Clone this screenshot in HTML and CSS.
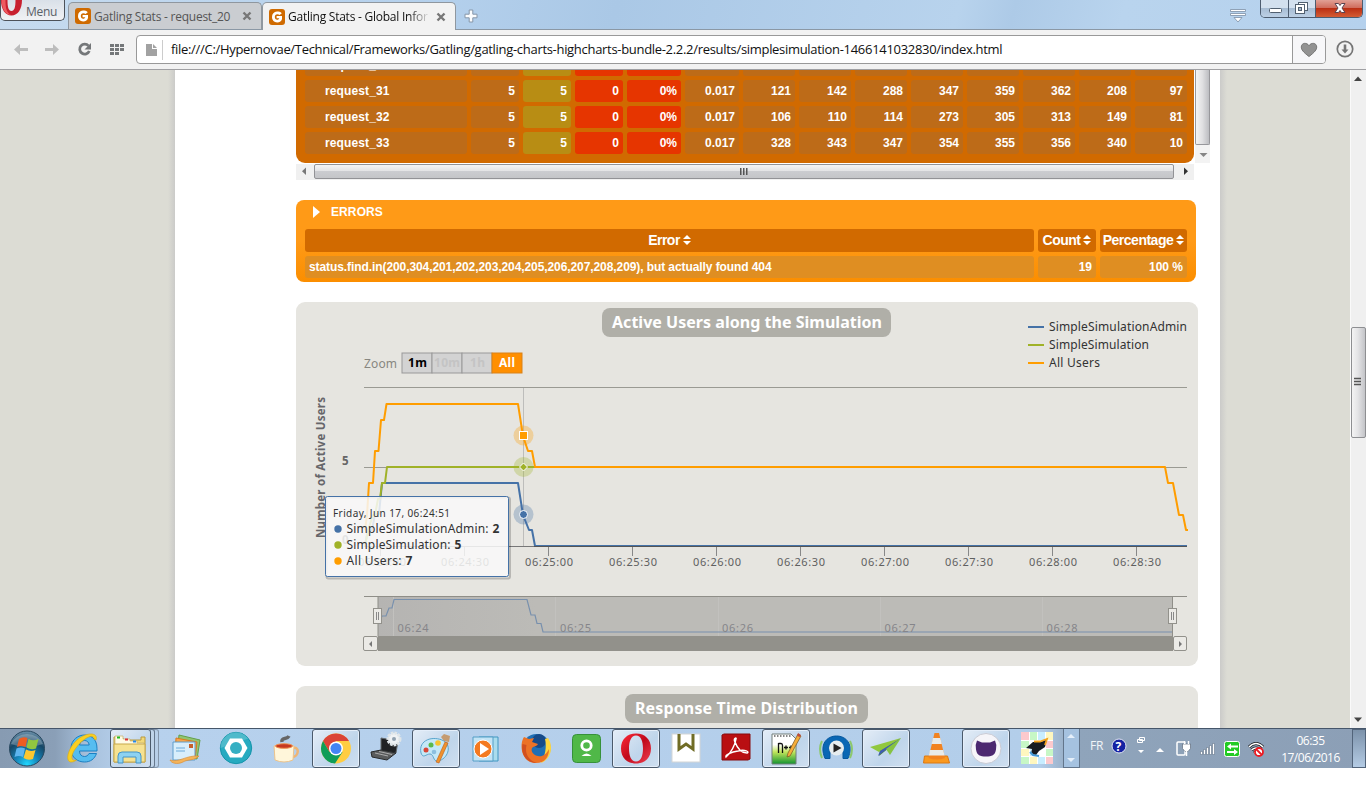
FILE: index.html
```html
<!DOCTYPE html>
<html lang="en">
<head>
<meta charset="utf-8">
<title>Gatling Stats - Global Information</title>
<link rel="stylesheet" href="styles.css">
</head>
<body>
<svg width="0" height="0" class="defs" aria-hidden="true">
  <defs>
    <linearGradient id="redO" x1="0" y1="0" x2="1" y2="1"><stop offset="0" stop-color="#ff2a38"/><stop offset=".5" stop-color="#c00a1c"/><stop offset="1" stop-color="#f04050"/></linearGradient>
    <linearGradient id="greyFill" x1="0" y1="0" x2="1" y2="0"><stop offset="0" stop-color="#b5b4b2"/><stop offset=".2" stop-color="#bcbbb7"/><stop offset="1" stop-color="#bcbbb7"/></linearGradient>
    <symbol id="gat" viewBox="0 0 16 16"><rect width="16" height="16" rx="3" fill="#cf6a00"/><path d="M12.8 4.2C11.4 2.9 9.8 2.6 8 2.6 4.9 2.8 3 5 3 8c0 3.200 2.200 5.400 5.200 5.400 2.600 0 4.300-1.300 4.800-3.400V7H7.600v2.300h2.700c-.3.900-1 1.500-2.100 1.500-1.500 0-2.400-1.200-2.400-2.800s.9-2.800 2.600-2.800c.9 0 1.600.3 2.200.9z" fill="#fff"/></symbol>
    <symbol id="sort" viewBox="0 0 8 10"><path d="M4 0l4 4H0zM0 6h8l-4 4z" fill="#fff"/></symbol>
  </defs>
</svg>

<header class="titlebar">
  <div class="menu"><svg width="22" height="18" viewBox="0 0 22 18"><path d="M0 0C0 9 4 15.500 10.500 15.500S21 9 21 0H14.500C14.500 7 13.500 11 10.500 11S6.500 7 6.500 0z" fill="#c8202f"/><path d="M.500 0C1 9 4 14.500 10 15 5 12.500 4.500 7 4.500 0z" fill="#ee5a60"/></svg><span>Menu</span></div>
  <div class="tab off"><svg width="16" height="16"><use href="#gat"/></svg><span class="tt">Gatling Stats - request_20</span><svg class="x" width="10" height="10" viewBox="0 0 10 10"><path d="M1.500 1.500l7 7M8.500 1.500l-7 7" stroke="#777" stroke-width="2.400"/></svg></div>
  <div class="tab on"><svg width="16" height="16"><use href="#gat"/></svg><span class="tt fade">Gatling Stats - Global Infor</span><svg class="x" width="10" height="10" viewBox="0 0 10 10"><path d="M1.500 1.500l7 7M8.500 1.500l-7 7" stroke="#777" stroke-width="2.400"/></svg></div>
  <svg class="plus" width="14" height="14" viewBox="0 0 14 14"><path d="M5.200 1h3.600v4.200H13v3.600H8.800V13H5.200V8.800H1V5.200h4.200z" fill="#fbfcfd" stroke="#8696a8"/></svg>
  <div class="grow"></div>
  <svg class="tabmenu" width="16" height="16" viewBox="0 0 16 16"><path d="M.500 1.500h15v2H.500zM.500 5.500h15v2H.500zM4 9.500h8l-4 4.500z" fill="#fff" stroke="#7b8ea4" stroke-width=".8"/></svg>
  <div class="winbtns">
    <div class="wb min"><svg width="28" height="17"><rect x="8.500" y="8.500" width="12" height="4" rx="1" fill="#fff" stroke="#526070"/></svg></div>
    <div class="wb max"><svg width="26" height="17"><rect x="9.500" y="2.500" width="9" height="8" fill="#fff" stroke="#526070"/><rect x="6.500" y="4.500" width="9" height="9" fill="#fff" stroke="#526070"/><rect x="9.500" y="7.500" width="3" height="3" fill="#a8b8ca" stroke="#526070"/></svg></div>
    <div class="wb cls"><svg width="47" height="17"><path d="M19 3.500h3.500l1.500 2 1.500-2H29l-3 4.500 3 4.500h-3.500l-1.500-2-1.500 2H19l3-4.500z" fill="#fff" stroke="#5b4450"/></svg></div>
  </div>
</header>

<nav class="toolbar">
  <svg class="navicons" width="136" height="39" viewBox="0 0 136 39">
    <path d="M14 19.500l6-5.500v4h8v3h-8v4z" fill="#bdbdbd"/><path d="M59 19.500l-6-5.500v4h-8v3h8v4z" fill="#bdbdbd"/>
    <path d="M88.500 15.800a5 5 0 1 0 .8 5.200" fill="none" stroke="#747779" stroke-width="2.800"/><path d="M91 13v6.500h-6.500z" fill="#747779"/>
    <g fill="#747779"><path d="M110 14h4v3h-4zM115 14h4v3h-4zM120 14h4v3h-4zM110 18h4v3h-4zM115 18h4v3h-4zM120 18h4v3h-4zM110 22h4v3h-4zM115 22h4v3h-4z"/></g>
  </svg>
  <div class="address">
    <svg width="26" height="26" viewBox="0 0 26 26"><path d="M9 7h6v5h5v7H9z" fill="#a2a2a2"/><path d="M16 7l4 4h-4z" fill="#a2a2a2"/><path d="M25.500 3v20" stroke="#ccc"/></svg>
    <span class="url">file:///C:/Hypernovae/Technical/Frameworks/Gatling/gatling-charts-highcharts-bundle-2.2.2/results/simplesimulation-1466141032830/index.html</span>
    <div class="heart"><svg width="18" height="16" viewBox="0 0 18 16"><path d="M9 14.500C3 10 1.300 7.500 1.300 5 1.300.6 7 .2 9 3.800 11 .2 16.700.6 16.700 5c0 2.500-1.700 5-7.700 9.500z" fill="#929292" stroke="#777"/></svg></div>
  </div>
  <svg class="dl" width="18" height="18" viewBox="0 0 18 18"><circle cx="9" cy="9" r="7.700" fill="none" stroke="#757575" stroke-width="1.700"/><path d="M7.700 4.500h2.600v5h2.200L9 13.500 5.500 9.500h2.200z" fill="#757575"/></svg>
</nav>

<main class="view">
  <div class="side left"></div>
  <section class="page">
    <div class="statswrap">
      <div class="stats">
        <div class="row cut"><i class="nm">request_30</i><i></i><i class="ok"></i><i class="ko"></i><i class="ko"></i><i></i><i></i><i></i><i></i><i></i><i></i><i></i><i></i><i></i></div>
        <div class="row"><i class="nm">request_31</i><i>5</i><i class="ok">5</i><i class="ko">0</i><i class="ko">0%</i><i>0.017</i><i>121</i><i>142</i><i>288</i><i>347</i><i>359</i><i>362</i><i>208</i><i>97</i></div>
        <div class="row"><i class="nm">request_32</i><i>5</i><i class="ok">5</i><i class="ko">0</i><i class="ko">0%</i><i>0.017</i><i>106</i><i>110</i><i>114</i><i>273</i><i>305</i><i>313</i><i>149</i><i>81</i></div>
        <div class="row"><i class="nm">request_33</i><i>5</i><i class="ok">5</i><i class="ko">0</i><i class="ko">0%</i><i>0.017</i><i>328</i><i>343</i><i>347</i><i>354</i><i>355</i><i>356</i><i>340</i><i>10</i></div>
      </div>
      <div class="vbar"><div class="vthumb"></div><svg width="15" height="18"><path d="M4.500 8h8l-4 4z" fill="#868686"/></svg></div>
    </div>
    <div class="hbar"><svg width="18" height="15"><path d="M10 3.500v7.500L6 7.200z" fill="#777"/></svg><div class="hthumb"><svg width="10" height="8"><path d="M1 0h1.500v7H1zM4 0h1.500v7H4zM7 0h1.500v7H7z" fill="#555"/></svg></div><svg width="20" height="15"><path d="M10 3.500v7.500l4-3.800z" fill="#333"/></svg></div>

    <div class="errors">
      <div class="ehead"><svg width="8" height="12"><path d="M0 0l7 6-7 6z" fill="#fff"/></svg><span>ERRORS</span></div>
      <div class="erow th"><b>Error<svg width="8" height="10"><use href="#sort"/></svg></b><b>Count<svg width="8" height="10"><use href="#sort"/></svg></b><b>Percentage<svg width="8" height="10"><use href="#sort"/></svg></b></div>
      <div class="erow td"><i>status.find.in(200,304,201,202,203,204,205,206,207,208,209), but actually found 404</i><i>19</i><i>100 %</i></div>
    </div>

    <div class="chart">
      <svg width="902" height="364" viewBox="296 302 902 364">
        <rect x="602" y="308" width="289" height="29" rx="8" fill="#b0afa8"/>
        <text x="612" y="328" textLength="270" class="ctitle">Active Users along the Simulation</text>
        <g stroke-width="2"><path d="M1028 327h16" stroke="#4572a7"/><path d="M1028 345h16" stroke="#a0b228"/><path d="M1028 363h16" stroke="#ff9d00"/></g>
        <g class="t12 dark"><text x="1049" y="331" textLength="138">SimpleSimulationAdmin</text><text x="1049" y="349" textLength="100">SimpleSimulation</text><text x="1049" y="367" textLength="51">All Users</text></g>
        <text x="364" y="368" textLength="33" class="t12 zoomlab">Zoom</text>
        <g stroke="#999" fill="#d3d3d3"><rect x="402" y="353" width="30" height="20"/><rect x="432" y="353" width="30" height="20"/><rect x="462" y="353" width="30" height="20"/><rect x="492" y="353" width="30" height="20" fill="#ff8f00" stroke="#d98218"/></g>
        <g class="zb"><text x="408" y="367" textLength="19">1m</text><text x="434" y="367" textLength="26" class="dis">10m</text><text x="470" y="367" textLength="15" class="dis">1h</text><text x="499" y="367" textLength="16" class="act">All</text></g>
        <path d="M364 387.500h823M364 467.500h823" stroke="#9a9a93"/>
        <path d="M523.500 388v158" stroke="#bdbdbb"/>
        <path d="M364 546.500h823" stroke="#777"/>
        <path d="M380.500 547v9M464.500 547v9M548.500 547v9M632.500 547v9M716.500 547v9M800.500 547v9M884.500 547v9M968.500 547v9M1052.500 547v9M1136.500 547v9" stroke="#888"/>
        <text transform="translate(325 538) rotate(-90)" textLength="141" class="ytitle">Number of Active Users</text>
        <text x="342" y="465" class="axb">5</text><text x="342" y="544" class="axb">0</text>
        <g class="t11 ax"><text x="358" y="566" textLength="48">06:24:00</text><text x="441" y="566" textLength="48">06:24:30</text><text x="525" y="566" textLength="48">06:25:00</text><text x="609" y="566" textLength="48">06:25:30</text><text x="693" y="566" textLength="48">06:26:00</text><text x="777" y="566" textLength="48">06:26:30</text><text x="861" y="566" textLength="48">06:27:00</text><text x="945" y="566" textLength="48">06:27:30</text><text x="1029" y="566" textLength="48">06:28:00</text><text x="1113" y="566" textLength="48">06:28:30</text></g>
        <g fill="none" stroke-width="2" stroke-linejoin="round">
          <path d="M365 545l3-15h4l3-16h4l3-31h136l5 32 6 15h3l3 16h652" stroke="#4572a7"/>
          <path d="M365 546l3-16 5-15h2l3-16h2l2-16h3l2-16H535" stroke="#a0b228"/>
          <path d="M365 530l2-15 2-32h4l2-32h3.500l2.500-31h3l2.500-16H518l5 32 5 15h4l3 16h630l3 16h5l6 32h4l3 15h2" stroke="#ff9d00"/>
        </g>
        <path d="M534 546.500h653" stroke="#555"/>
        <circle cx="523.500" cy="435.500" r="10" fill="#ff9d00" opacity=".3"/><rect x="519.500" y="431.500" width="8" height="8" fill="#ff9d00" stroke="#fff"/>
        <circle cx="523.500" cy="467" r="10" fill="#a0b228" opacity=".3"/><path d="M523.500 463l4 4-4 4-4-4z" fill="#a0b228" stroke="#fff"/>
        <circle cx="523.500" cy="514.500" r="10" fill="#4572a7" opacity=".3"/><circle cx="523.500" cy="514.500" r="4" fill="#4572a7" stroke="#fff"/>

        <rect x="378" y="597" width="794" height="39" fill="url(#greyFill)"/>
        <path d="M393.500 597v39M555.500 597v39M718.500 597v39M880.500 597v39M1042.500 597v39" stroke="#c2c1be"/>
        <path d="M364 596.500h14v40M1172.500 636v-39.500M378 596.500h809" stroke="#8f8e88" fill="none"/>
        <path d="M379 624l3-8h4l3-8h3l2-8.500h133l4 15.500h4l2 8.500h4l2 8.500h629" fill="none" stroke="#7890ad" stroke-width="1.200"/>
        <g class="t11 nav"><text x="397.500" y="632" textLength="31">06:24</text><text x="560" y="632" textLength="31">06:25</text><text x="722" y="632" textLength="31">06:26</text><text x="884.500" y="632" textLength="31">06:27</text><text x="1046.500" y="632" textLength="31">06:28</text></g>
        <rect x="378" y="636" width="795" height="15" fill="#92918b"/>
        <g fill="#ebeae6" stroke="#92918b"><rect x="363.500" y="636.500" width="14" height="14" rx="1.500"/><rect x="1173.500" y="636.500" width="13" height="14" rx="1.500"/><rect x="373.500" y="608.500" width="8" height="15"/><rect x="1168.500" y="608.500" width="8" height="15"/></g>
        <path d="M376.500 612v8M378.500 612v8M1171.500 612v8M1173.500 612v8" stroke="#888"/>
        <path d="M372 641v6l-3-3zM1179 641v6l3-3z" fill="#777"/>

        <rect x="326.500" y="497.500" width="183.500" height="81" rx="2" fill="none" stroke="#000" stroke-width="2" opacity=".2"/>
        <rect x="325.500" y="496.500" width="183" height="80" rx="2" fill="#f9f9f9" fill-opacity=".85" stroke="#4572a7"/>
        <text x="333" y="517" textLength="117" class="t10 dark">Friday, Jun 17, 06:24:51</text>
        <circle cx="338" cy="529" r="3.700" fill="#4572a7"/><circle cx="338" cy="545" r="3.700" fill="#a0b228"/><circle cx="338" cy="561" r="3.700" fill="#ff9d00"/>
        <g class="t12 dark"><text x="346.500" y="533" textLength="142">SimpleSimulationAdmin:</text><text x="346.500" y="549" textLength="104">SimpleSimulation:</text><text x="346.500" y="565" textLength="55">All Users:</text><g font-weight="700"><text x="492.500" y="533">2</text><text x="454.500" y="549">5</text><text x="405.500" y="565">7</text></g></g>
      </svg>
    </div>

    <div class="chart second">
      <svg width="902" height="60" viewBox="296 686 902 60"><rect x="625" y="694" width="243" height="29" rx="8" fill="#b0afa8"/><text x="635" y="714" textLength="223" class="ctitle">Response Time Distribution</text></svg>
    </div>
  </section>
  <div class="side right"></div>
  <div class="scroll"><svg width="16" height="658"><path d="M3 11l4-4.500 4 4.500z" fill="#444"/><path d="M3 647.500h8l-4 4.500z" fill="#444"/><defs><linearGradient id="sg"><stop offset="0" stop-color="#f5f5f5"/><stop offset=".45" stop-color="#e4e4e6"/><stop offset="1" stop-color="#c1c2c6"/></linearGradient></defs><rect x=".5" y="257.500" width="14" height="110" rx="1.500" fill="url(#sg)" stroke="#8e8f92"/><path d="M3 308.500h7M3 311.500h7M3 314.500h7" stroke="#555" stroke-width="1.500"/></svg></div>
</main>

<footer class="taskbar">
  <div class="start"><svg width="61" height="39" viewBox="0 0 61 39">
    <defs><radialGradient id="orb" cx=".5" cy=".95" r=".95"><stop offset="0" stop-color="#1fd7ff"/><stop offset=".35" stop-color="#1583b8"/><stop offset=".7" stop-color="#164766"/><stop offset="1" stop-color="#6f94ad"/></radialGradient></defs>
    <circle cx="27" cy="19.500" r="17.500" fill="url(#orb)" stroke="#29485f"/><path d="M11 15a17 15 0 0 1 32 0q-16 6-32 0z" fill="#fff" opacity=".25"/>
    <path d="M19 10q4-3 8.500-1l-2 9q-4-2-8.500 0z" fill="#ee5d22"/><path d="M28.500 10q5 2.500 10 0l-2.500 9.500q-5 2-9.500-1z" fill="#91c640"/><path d="M16.500 19.500q4.500-2 8.500 0l-2 8.500q-4-2-8.500 0z" fill="#5db5ef"/><path d="M26 20.500q4.500 2.500 9.500.5L33 30q-5 2-9.500-1z" fill="#fdc72f"/></svg></div>
  <div class="tile"><svg width="50" height="39" viewBox="3 0 50 39"><g transform="translate(1 0)"><path d="M38 19.500C38 9 31 6 25.500 6S12 10 12 19.500 19 33 25.500 33c6 0 10-3 12-8.500h-7.500c-1 2-2.500 3-4.500 3-3 0-5-2-5-5.500H38zM20.500 16c.5-3 2.500-4.500 5-4.500s4.300 1.500 4.700 4.500z" fill="#56bdf0" stroke="#1b7fc2"/><path d="M37 11C40 2 24 3 15 14 7 24 7 34 13 33c1.500 0 3-1 4.500-2-6 2-6.500-5 1-14C25 9 35 4 35 10z" fill="#f9cf22" stroke="#d9a80f" stroke-width=".6"/></g></svg></div>
  <div class="tile open expl"><svg width="50" height="39" viewBox="0 0 50 39"><path d="M4 12V8h8l2 3h17v-3h4v25H4z" fill="#f2d978" stroke="#b99a3c"/><path d="M5 7h8v3h7v2h7v2h7v4H5z" fill="#fffbe6" stroke="#c6b069" stroke-width=".7"/><path d="M7 7.500h3v2H7z" fill="#2b2"/><path d="M15 9.500h3v2h-3z" fill="#d33"/><path d="M23 11.500h3v2h-3z" fill="#28e"/><path d="M4 15h31v18H4z" fill="#f6e291" stroke="#c7a84c"/><path d="M8 34v-7q0-4 4-4h15q4 0 4 4v7h-5v-6H13v6z" fill="#8dd2f1" stroke="#4494c6"/></svg></div>
  <div class="tile"><svg width="50" height="39" viewBox="0 0 50 39"><path d="M18 6l21 5-3 19-20-5z" fill="#91c571" stroke="#64a04b"/><path d="M15 9l21 4-2 17-20-4z" fill="#f6a54b" stroke="#d97920"/><path d="M12 13h22v18H12z" fill="#d8eefb" stroke="#5f9cca"/><path d="M28 15h4v4h-4z" fill="#c6612c"/><path d="M15 19h9M15 22h9" stroke="#6aaada"/><path d="M9 31c9 3 16-5 29-4-5 5-11 3-16 6-6 3-12 1-13-2z" fill="#f5b45a" stroke="#dd8f33" stroke-width=".7"/></svg></div>
  <div class="tile"><svg width="50" height="39" viewBox="0 0 50 39"><circle cx="25" cy="19" r="15.700" fill="#26aac0" stroke="#1594ab"/><path d="M9.500 19a15.500 15.500 0 0 1 28-9.500z" fill="#69c5d2" opacity=".6"/><path d="M19 9.500h12l5.500 9.500-5.500 9.500H19L13.500 19z" fill="#fff"/><circle cx="25" cy="19" r="6" fill="#35afc3"/></svg></div>
  <div class="tile"><svg width="50" height="39" viewBox="0 0 50 39"><path d="M32 19c7-2 6 9-1 9" fill="none" stroke="#eeb574" stroke-width="2.500"/><path d="M13 17q10-3 20 0l-1 14q-9 4-18 0z" fill="#fff6da" stroke="#ecc38b"/><ellipse cx="23" cy="17" rx="8.500" ry="2.300" fill="#c63821" stroke="#ef9350"/><path d="M21 13c-1-5 5-2 7-6" stroke="#666" stroke-width="3.500" fill="none"/></svg></div>
  <div class="tile open"><svg width="50" height="39" viewBox="0 0 50 39"><circle cx="25" cy="19.500" r="15" fill="#ffcd42"/><path d="M12 12a15 15 0 0 1 26 0H25l-6.500 11z" fill="#db4437"/><path d="M12 12a15 15 0 0 0 12 22.500L31.500 23 18.500 23z" fill="#0f9d58"/><circle cx="25" cy="19.500" r="7" fill="#fff"/><circle cx="25" cy="19.500" r="5.500" fill="#4285f4"/></svg></div>
  <div class="tile"><svg width="50" height="39" viewBox="0 0 50 39"><path d="M20 9l17 3-2 12-15-2z" fill="#202224" stroke="#656a6d"/><path d="M10 23l10-2 15 3-9 7-15-3z" fill="#595b5c" stroke="#282a2b"/><path d="M14 24l13 3M18 22.500l13 3" stroke="#aaa"/><circle cx="33" cy="10" r="6" fill="#eff2f4" stroke="#dfe5e8" stroke-width="3" stroke-dasharray="2.500 1"/><circle cx="33" cy="10" r="2" fill="#90a1af"/></svg></div>
  <div class="tile open"><svg width="50" height="39" viewBox="0 0 50 39"><path d="M10 24c-3-13 12-18 23-12 8 5 4 18-6 20-5 1-4-7-8-7s-7 5-9-1z" fill="#c4e8f7" stroke="#5aa5cc"/><circle cx="15" cy="21" r="2.500" fill="#d84636"/><circle cx="20" cy="16" r="2.500" fill="#5ab94b"/><circle cx="27" cy="14" r="2.800" fill="#f6c431"/><circle cx="23" cy="23" r="2.300" fill="#8bbfe0"/><path d="M34 13l3 1-9 20-3-1z" fill="#ef922d" stroke="#b95d19" stroke-width=".6"/><path d="M33 5l6 2-1 6-5-1-3-4z" fill="#c59b70"/></svg></div>
  <div class="tile"><svg width="50" height="39" viewBox="0 0 50 39"><path d="M18 8h19v24H18z" fill="#aadced" stroke="#4096c1"/><path d="M12 8h20v24H12z" fill="#c3e4f5" stroke="#559ec6"/><circle cx="22" cy="20" r="9" fill="#f47a20" stroke="#fff"/><path d="M19 14l9 6-9 6z" fill="#fff"/></svg></div>
  <div class="tile"><svg width="50" height="39" viewBox="0 0 50 39"><circle cx="25.500" cy="19" r="14" fill="#1f6fb4"/><circle cx="28" cy="12" r="7" fill="#174a88"/><path d="M37 9c6 9 3 21-7 25 4-7 6-16 4-24z" fill="#ffd53d"/><path d="M13 8C8 15 10 34 25 34c9 0 13-6 13-14-3 6-7 8-11 7-6-1-8-7-5-9 2-1 4-1 5-3l-6-2 2-4-5 1z" fill="#ec7225"/><path d="M11.500 15c-2 10 4 19 14 19-8-3-12-9-10-18z" fill="#d2501f"/></svg></div>
  <div class="tile"><svg width="50" height="39" viewBox="0 0 50 39"><rect x="11.500" y="5.500" width="28" height="28" rx="4" fill="#50b848" stroke="#36913a"/><circle cx="25.500" cy="16.500" r="4.700" fill="none" stroke="#fff" stroke-width="2.800"/><path d="M20.500 27q5-5 10 0z" fill="#fff"/></svg></div>
  <div class="tile open"><svg width="50" height="39" viewBox="0 0 50 39"><path fill-rule="evenodd" d="M25 4.500c9 0 15 6 15 15s-6 15-15 15-15-6-15-15 6-15 15-15zm0 2c-5 0-7 6-7 13s2 13 7 13 7-6 7-13-2-13-7-13z" fill="url(#redO)"/></svg></div>
  <div class="tile"><svg width="50" height="39" viewBox="0 0 50 39"><rect x="11" y="5" width="28" height="28" fill="#fff" stroke="#d3d5d5"/><path d="M18 5v15l7-5 7 5V5" transform="translate(0 0)" fill="none" stroke="#706c25" stroke-width="3"/></svg></div>
  <div class="tile"><svg width="50" height="39" viewBox="0 0 50 39"><path d="M11 6l2-1h26v25l-2 1H11z" fill="#b90f12" stroke="#870b0c"/><path d="M15 28c5-4 9-12 10-18 1-2-3-1-1 3 3 8 8 11 12 11 3-1-2-4-9-2-7 1-13 4-12 6z" fill="none" stroke="#fff" stroke-width="1.500"/></svg></div>
  <div class="tile open"><svg width="50" height="39" viewBox="0 0 50 39"><defs><linearGradient id="npp" x2="0" y2="1"><stop offset=".35" stop-color="#fff"/><stop offset=".6" stop-color="#c1e55b"/><stop offset="1" stop-color="#129331"/></linearGradient></defs><path d="M11 5h19l5 5v25H11z" fill="url(#npp)" stroke="#737f7b"/><path d="M13 7h18" stroke="#888" stroke-dasharray="1.500 1.500" stroke-width="2"/><path d="M17.500 24V14M17.500 14.500h2.500q1.500 0 1.500 2V24M23 18.500h4M25 16.500v4M28 18.500h4M30 16.500v4" fill="none" stroke="#111" stroke-width="1.300"/><path d="M37 5l3 2-11 20-3 1 1-4z" fill="#f5ad3b" stroke="#765422" stroke-width=".7"/><path d="M37 4l3 2-1 2-3-1z" fill="#bd4d3c"/></svg></div>
  <div class="tile"><svg width="50" height="39" viewBox="0 0 50 39"><path d="M11 12q-4 8 0 17M39 12q4 8 0 17" fill="none" stroke="#8dc86c" stroke-width="2"/><path d="M14 29.500C8 15 16 7 25.500 7S43 15 37 29.500h-5V20q-6.500-7-13 0v9.500z" fill="#0a67b4" stroke="#07589e"/><circle cx="25.500" cy="19" r="7.500" fill="#e7edef"/><path d="M22.500 14.500l8 4.500-8 4.500z" fill="#222"/></svg></div>
  <div class="tile open"><svg width="50" height="39" viewBox="0 0 50 39"><path d="M9 18l31-9-22 14z" fill="#91c83e"/><path d="M19 22l21-13-22 18z" fill="#4e8a33"/><path d="M19 22l20-12-22 17z" fill="#3f5db2"/><path d="M25 20l15-11-11 17z" fill="#86c342"/></svg></div>
  <div class="tile"><svg width="50" height="39" viewBox="0 0 50 39"><path d="M13.500 27h23l2 7h-26z" fill="#fa991f" stroke="#dc7813"/><path d="M23.500 4h4.500l6 25q-8 3-16.500 0z" fill="#f28320"/><path d="M22 9h7.300l1.500 6H20.600zM19 21h13.200l1.400 5.500H17.800z" fill="#e9ebe9"/></svg></div>
  <div class="tile open"><svg width="50" height="39" viewBox="0 0 50 39"><circle cx="25" cy="19.500" r="15" fill="#f6f5f9" stroke="#cacbd4"/><path d="M16 11.500l5 2h8l5-2q2 4 1 9c-1 6-4 7-10 7s-9-1-10-7q-1-5 1-9z" fill="#4c2870"/></svg></div>
  <div class="tile last"><svg width="50" height="39" viewBox="0 0 50 39"><path d="M9 3h32v32H9z" fill="#fff"/><path d="M9 3h8v8H9zM34 12h7v7h-7zM34 28h7v7h-7z" fill="#fcc9cd"/><path d="M18 3h7v8h-7zM9 12h8v7H9zM34 20h7v7h-7zM9 28h8v7H9z" fill="#c7f7c6"/><path d="M26 3h7v8h-7zM18 20h7v7h-7zM26 28h7v7h-7z" fill="#c8edff"/><path d="M34 3h7v8h-7zM9 20h8v7H9zM18 28h7v7h-7z" fill="#fff7bf"/><path d="M14 19l7-6 8 0 6-3-2 8-6 4-3 4-5-1 1-5z" fill="#171b20"/><path d="M22 12.500h6l7-2.500-2 6" fill="none" stroke="#f4a31e" stroke-width="1.800"/><path d="M18 23l3 3 6 1" fill="none" stroke="#459bd7" stroke-width="2"/></svg></div>
  <div class="spin"><svg width="16" height="39"><path d="M3 9h8L7 5zM3 29h8l-4 4z" fill="#e5effa"/></svg></div>
  <span class="lang">FR</span>
  <svg class="tray" width="160" height="39" viewBox="1110 729 160 39">
    <circle cx="1119" cy="746" r="7" fill="#1522a2" stroke="#e1e5f2"/><text x="1115.500" y="750.500" class="q">?</text>
    <path d="M1139.500 737.500h5v3h-5zM1137.500 739.500h5v3h-5z" fill="#8da1b7" stroke="#fff"/><path d="M1138 750h6l-3 3zM1156 752l4-4 4 4z" fill="#fff"/>
    <rect x="1177" y="742" width="8" height="13" rx="1" fill="#8da1b7" stroke="#fff" stroke-width="1.500"/><path d="M1182.500 744h8v4.500l-2.500 3h-3l-2.500-3z" fill="#fff" stroke="#4d5b6b" stroke-width=".6"/><path d="M1184.500 744v-3M1188.500 744v-3M1186.500 751v5" stroke="#fff" stroke-width="1.500"/>
    <path d="M1200.500 751.500h2v3h-2zM1203.500 749.500h2v5h-2zM1206.500 747.500h2v7h-2zM1209.500 745.500h2v9h-2zM1212.500 743.500h2v11h-2z" fill="#fff" stroke="#53657a" stroke-width=".5"/>
    <rect x="1224.500" y="741.500" width="15" height="15" rx="2" fill="#22cb24" stroke="#fff"/><path d="M1227 746.500l4-3v2h7v2h-7v2zM1238 752l-4-3v2h-7v2h7v2z" fill="#fff"/>
    <path d="M1249 747q7-7 14 0M1251.500 750q4.500-4 9 0M1254 753q2-2 4 0" fill="none" stroke="#17191c" stroke-width="3"/><path d="M1249 747q7-7 14 0M1251.500 750q4.500-4 9 0M1254 753q2-2 4 0" fill="none" stroke="#fff" stroke-width="1.400"/><circle cx="1259" cy="752" r="4" fill="#fff" stroke="#ec1b23" stroke-width="1.800"/><path d="M1256 749l6 6" stroke="#ec1b23" stroke-width="1.800"/>
  </svg>
  <div class="clock"><span>06:35</span><span>17/06/2016</span></div>
  <div class="desk"></div>
</footer>
</body>
</html>
```
FILE: styles.css
```css
* { box-sizing: border-box; }
html, body { margin: 0; background: #fff; overflow: hidden; }
body { width: 1366px; height: 800px; font-family: "Open Sans", "Noto Sans", sans-serif; display: flex; flex-direction: column; }
svg { display: block; flex: none; }
.defs { position: absolute; }
i { font-style: normal; }

.titlebar { height: 30px; display: flex; align-items: flex-start; background: linear-gradient(105deg, #c6dbef 0, #b4d0ec 32%, #aac8e6 45%, #b8d3ed 70%, #adcae7 74%, #b9d4ee 82%, #b5d1ed 100%); border-bottom: 1px solid #8b98a5; }
.menu { width: 65px; height: 21px; border: 1px solid #4d5259; border-top: 0; border-radius: 0 0 5px 5px; background: linear-gradient(#d9e0e8, #f1f2f4); display: flex; overflow: hidden; font-size: 12px; line-height: 24px; letter-spacing: -.3px; color: #5a6067; }
.menu span { margin-left: 3px; }
.tab { height: 28px; margin-top: 2px; border: 1px solid #8f979f; border-bottom: 0; border-radius: 5px 5px 0 0; display: flex; align-items: center; padding: 0 7px 0 6px; color: #555; font-size: 12px; }
.tab.off { width: 194px; margin-left: 3px; background: #cacdd1; height: 27px; }
.tab.on { width: 194px; background: #f2f2f2; color: #111; }
.tt { width: 142px; margin-left: 3px; letter-spacing: -.24px; white-space: nowrap; overflow: hidden; }
.fade { -webkit-mask-image: linear-gradient(90deg, #000 85%, transparent); mask-image: linear-gradient(90deg, #000 85%, transparent); }
.x { margin-left: auto; }
.tab .x { margin-right: 2px; }
.plus { margin: 9px 0 0 8px; }
.grow { flex: 1; }
.tabmenu { margin: 8px 14px 0 0; }
.winbtns { display: flex; height: 18px; width: 103px; border: 1px solid #4d5c6f; border-top: 0; border-radius: 0 0 5px 5px; overflow: hidden; margin-right: 3px; }
.wb { height: 17px; background: linear-gradient(#d3e0ee 45%, #a6bbd2 46%, #bdd0e5); border-right: 1px solid #4d5c6f; }
.min { width: 28px; } .max { width: 27px; }
.cls { flex: 1; background: linear-gradient(#e1a095, #d06d5d 45%, #b92c12 46%, #d45c33); border: 0; }

.toolbar { height: 40px; background: #f2f2f2; border-bottom: 1px solid #a0a0a3; display: flex; align-items: flex-start; }
.address { margin-top: 5px; width: 1190px; height: 29px; border: 1px solid #999; border-radius: 4px; background: #fff; display: flex; align-items: center; overflow: hidden; }
.url { margin: -2px 0 0 8px; font-size: 13px; color: #111; white-space: nowrap; letter-spacing: -.306px; }
.heart { width: 33px; height: 27px; margin-left: auto; border-left: 1px solid #999; background: #f7f7f9; display: flex; align-items: center; justify-content: center; }
.dl { margin: 10px 0 0 10px; }

.view { height: 658px; display: flex; overflow: hidden; }
.side { background: #dcdcd4; }
.left { width: 175px; background: linear-gradient(90deg, #dcdcd4 168px, #cbcbc9 175px); }
.page { width: 1045px; padding-left: 121px; background: #fff; }
.right { width: 130px; background: linear-gradient(90deg, #cbcbc9 0, #dcdcd4 7px); }
.scroll { width: 16px; background: #f0f0f0; border-left: 1px solid #fafafa; }

.statswrap { display: flex; height: 93px; }
.stats { width: 898px; height: 93px; background: #d16a00; border-radius: 0 0 9px 9px; padding: 0 9px; overflow: hidden; display: flex; flex-direction: column; gap: 4px; }
.row { display: grid; grid-template-columns: 162px 48px 48px 48px 54px 54px repeat(8, 52px); gap: 4px; font: bold 12px/23px "Liberation Sans", Arial, sans-serif; color: #fff; text-align: right; flex: none; }
.row i { background: #bd6b18; border-radius: 3px; height: 22px; padding-right: 4px; }
.row .nm { text-align: left; padding-left: 20px; letter-spacing: .12px; }
.row .ok { background: #b88d14; }
.row .ko { background: #e63500; }
.cut { margin-top: -16px; }
.vbar { width: 15px; margin-left: 1px; background: #f3f3f3; }
.vthumb { height: 75px; border: 1px solid #97979b; border-top: 0; background: linear-gradient(90deg, #f4f4f4, #dfdfe1 50%, #bcbdc1); border-radius: 0 0 2px 2px; }
.hbar { width: 898px; height: 16px; margin-top: 1px; display: flex; background: #f0f0f0; }
.hthumb { flex: 1; height: 15px; border: 1px solid #929296; border-radius: 2px; background: linear-gradient(#f4f4f4, #e2e2e4 48%, #cbccd0 50%, #c4c5c8); display: flex; justify-content: center; padding-top: 3px; }

.errors { margin-top: 20px; width: 900px; height: 82px; border-radius: 8px; padding: 0 9px; background: linear-gradient(#ff9a17 50%, #fb8e00); color: #fff; font-family: "Liberation Sans", Arial, sans-serif; font-weight: bold; }
.ehead { height: 29px; display: flex; padding: 6px 0 0 8px; font-size: 12px; line-height: 12px; letter-spacing: .1px; }
.ehead span { margin-left: 10px; }
.erow { display: grid; grid-template-columns: 729px 58px 87px; gap: 4px; }
.th b { height: 23px; padding-bottom: 1px; background: #d16a00; border-radius: 3px; display: flex; align-items: center; justify-content: center; font-size: 14px; letter-spacing: -.5px; }
.th svg { margin-left: 3px; }
.td { margin-top: 4px; font-size: 12px; line-height: 22px; }
.td i { height: 22px; background: #df8e22; border-radius: 3px; padding: 0 4px; text-align: right; }
.td i:first-child { text-align: left; letter-spacing: -.085px; }

.chart { margin-top: 20px; width: 902px; height: 364px; background: #e6e5e0; border-radius: 9px; font-family: "Noto Sans", "Open Sans", sans-serif; }
.second { height: 60px; }
.ctitle { font-size: 16px; font-weight: 700; fill: #fff; }
.t12 { font-size: 12px; } .t11 { font-size: 11px; } .t10 { font-size: 10px; }
.dark { fill: #333; } .zoomlab { fill: #888780; }
.zb { font-size: 12px; font-weight: 700; }
.dis { fill: #c4c4c4; } .act { fill: #fff; }
.ytitle { font-size: 11.5px; font-weight: 700; fill: #66666a; }
.axb { font-size: 11.5px; font-weight: 700; fill: #666; }
.ax { fill: #606060; } .nav { fill: #85858a; }

.taskbar { height: 40px; border-top: 1px solid #46566a; background: linear-gradient(90deg, #879bb2 0, #8a9fb7 55px, #a9c2dd 90px, #b7d1ed 130px, #b3ceea 1040px, #8fa4bb 1075px, #8c9fb6 1366px); display: flex; }
.start { width: 61px; }
.tile { width: 50px; height: 39px; display: flex; justify-content: center; }
.open { width: 48px; margin: 0 1px; border: 1px solid #4b5a6b; border-radius: 3px; background: linear-gradient(135deg, #e4edf7, #bfd5eb 60%, #cfdff0); box-shadow: inset 0 0 0 1px #e4eefa; }
.open svg { margin: -1px; }
.expl { width: 41px; margin: 0 10px 0 -1px; box-shadow: 4px 0 0 -1px #c0d4e9, 4px 0 0 0 #66788d, 8px 0 0 -1px #b8cfe8, 8px 0 0 0 #8496ab; justify-content: flex-start; }
.last { width: 52px; }
.spin { width: 17px; border: 1px solid #62758b; border-top: 0; background: #a5c2e0; }
.lang { width: 30px; padding: 8px 0 0 10px; font-size: 12px; line-height: 18px; letter-spacing: -.3px; color: #f2f5f8; }
.q { font: bold 12px "Open Sans", sans-serif; fill: #fff; }
.clock { width: 81px; display: flex; flex-direction: column; align-items: center; color: #fff; font-size: 12px; line-height: 17px; padding-top: 3px; letter-spacing: -.5px; }
.desk { margin-left: auto; width: 14px; border: 1px solid #52647a; background: linear-gradient(#7d93ab, #b4cbe4); }
```
